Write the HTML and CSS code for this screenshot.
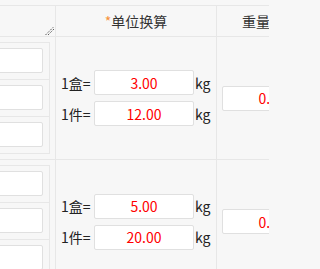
FILE: index.html
```html
<!DOCTYPE html>
<html lang="zh-CN">
<head>
<meta charset="utf-8">
<title>单位换算</title>
<link rel="stylesheet" href="styles.css">
</head>
<body>
<div class="viewport">
<div class="grid">
  <div class="head c1">
    <svg class="grip" width="10" height="10" viewBox="0 0 10 10">
      <line x1="0.5" y1="9" x2="8.5" y2="1" />
      <line x1="3" y1="9" x2="9.5" y2="2.5" />
    </svg>
  </div>
  <div class="head c2"><span class="req">*</span>单位换算</div>
  <div class="head c3">重量</div>

  <div class="cell c1">
    <div class="box">
      <div class="subrow"><input class="inp" type="text"></div>
      <div class="subrow"><input class="inp" type="text"></div>
      <div class="subrow"><input class="inp" type="text"></div>
    </div>
  </div>
  <div class="cell c2">
    <div class="conv">
      <div class="line"><span class="lbl">1盒=</span><input class="inp val" type="text" value="3.00"><span class="unit">kg</span></div>
      <div class="line"><span class="lbl">1件=</span><input class="inp val" type="text" value="12.00"><span class="unit">kg</span></div>
    </div>
  </div>
  <div class="cell c3"><input class="inp val" type="text" value="0.25"></div>

  <div class="cell c1">
    <div class="box">
      <div class="subrow"><input class="inp" type="text"></div>
      <div class="subrow"><input class="inp" type="text"></div>
      <div class="subrow"><input class="inp" type="text"></div>
    </div>
  </div>
  <div class="cell c2">
    <div class="conv">
      <div class="line"><span class="lbl">1盒=</span><input class="inp val" type="text" value="5.00"><span class="unit">kg</span></div>
      <div class="line"><span class="lbl">1件=</span><input class="inp val" type="text" value="20.00"><span class="unit">kg</span></div>
    </div>
  </div>
  <div class="cell c3"><input class="inp val" type="text" value="0.25"></div>
</div>
</div>
</body>
</html>
```
FILE: styles.css
```css
html, body {
  margin: 0;
  padding: 0;
  background: #f7f7f7;
  overflow: hidden;
}
body {
  font-family: "Noto Sans CJK SC", "Noto Sans", sans-serif;
  font-size: 14px;
  color: #333;
}
.viewport {
  width: 269px;
  height: 269px;
  overflow: hidden;
}
.grid {
  display: grid;
  grid-template-columns: 116px 161px 120px;
  grid-template-rows: 31px 123px 124px;
  margin-top: 5px;
  margin-left: -60px;
  border-top: 1px solid #e7e7e7;
  width: 397px;
}
.grid > div {
  box-sizing: border-box;
  border-right: 1px solid #e7e7e7;
  border-bottom: 1px solid #e7e7e7;
}
.head {
  display: flex;
  align-items: center;
  justify-content: center;
  position: relative;
  line-height: 1;
}
.head.c3 {
  justify-content: flex-start;
  padding-left: 25px;
}
.req {
  color: #f7923a;
}
.grip {
  position: absolute;
  right: 0;
  bottom: 0;
}
.grip line {
  stroke: #444;
  stroke-width: 1;
  stroke-dasharray: 1.2 1.2;
}
.cell.c1 {
  padding: 5px;
}
.box {
  border: 1px solid #e7e7e7;
}
.subrow {
  padding: 5px 6px 6px 6px;
  border-bottom: 1px solid #e7e7e7;
}
.subrow:last-child {
  border-bottom: none;
}
.inp {
  display: block;
  box-sizing: border-box;
  width: 100%;
  height: 25px;
  margin: 0;
  padding: 0 4px;
  border: 1px solid #e0e0e0;
  border-radius: 2px;
  background: #fff;
  font-family: "Noto Sans CJK SC", "Noto Sans", sans-serif;
  font-size: 14px;
  outline: none;
}
.val {
  color: #f00;
  text-align: center;
  width: 100px;
}
.cell.c2 {
  display: flex;
  align-items: center;
  padding-left: 5px;
}
.conv {
  display: flex;
  flex-direction: column;
  gap: 6px;
}
.line {
  display: flex;
  align-items: center;
}
.lbl {
  width: 33px;
  color: #222;
}
.unit {
  margin-left: 1px;
  color: #222;
}
.cell.c3 {
  display: flex;
  align-items: center;
  padding-left: 5px;
}
```
